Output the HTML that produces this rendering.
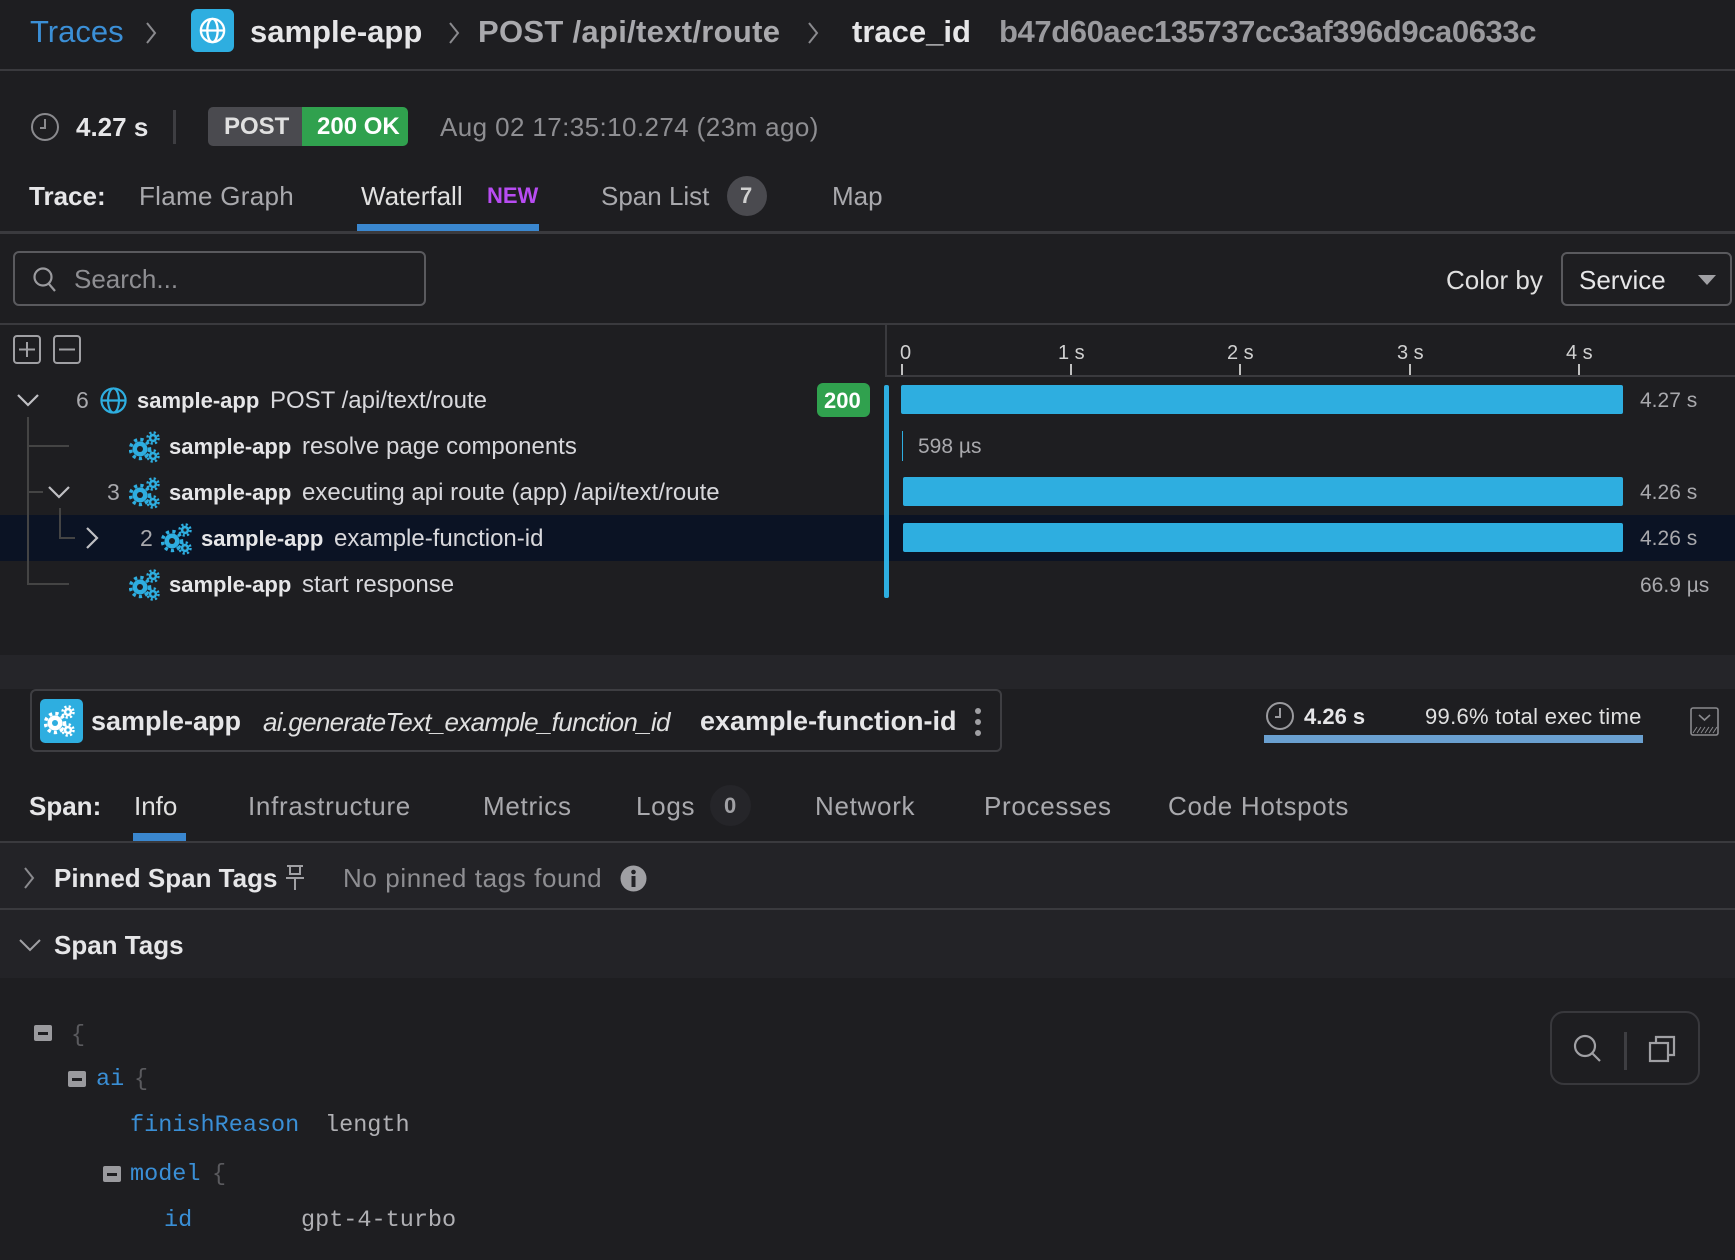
<!DOCTYPE html>
<html><head><meta charset="utf-8">
<style>
*{margin:0;padding:0;box-sizing:border-box}
body{width:1735px;height:1260px;background:#1e1e21;font-family:"Liberation Sans",sans-serif;position:relative;overflow:hidden;color:#a9a9ad}
.t{position:absolute;white-space:nowrap;line-height:1}
.b{font-weight:bold;color:#e6e6e8}
.abs{position:absolute}
.hl{position:absolute;background:#3a3a3e}
.n{font-size:24px;color:#d8d8dc}
.st{font-size:26px;letter-spacing:0.7px}
</style></head><body>
<!-- header -->
<div class="t" style="left:30px;top:16px;font-size:31px;color:#3b8fd6">Traces</div>
<svg class="abs" style="left:143px;top:20px" width="16" height="26"><path d="M4 3 L12 13 L4 23" stroke="#8a8a8e" stroke-width="2" fill="none"/></svg>
<div class="abs" style="left:191px;top:9px;width:43px;height:43px;background:#2eaee0;border-radius:6px"></div>
<svg class="abs" style="left:197px;top:15px" width="31" height="31" viewBox="0 0 24 24" fill="none" stroke="#fff" stroke-width="1.8"><circle cx="12" cy="12" r="9"/><ellipse cx="12" cy="12" rx="4" ry="9"/><line x1="3" y1="12" x2="21" y2="12"/></svg>
<div class="t b" style="left:250px;top:16px;font-size:31px">sample-app</div>
<svg class="abs" style="left:446px;top:20px" width="16" height="26"><path d="M4 3 L12 13 L4 23" stroke="#8a8a8e" stroke-width="2" fill="none"/></svg>
<div class="t" style="left:478px;top:16px;font-size:31px;font-weight:bold;color:#a9a9ad;letter-spacing:0.3px">POST /api/text/route</div>
<svg class="abs" style="left:805px;top:20px" width="16" height="26"><path d="M4 3 L12 13 L4 23" stroke="#8a8a8e" stroke-width="2" fill="none"/></svg>
<div class="t b" style="left:852px;top:16px;font-size:31px">trace_id</div>
<div class="t" style="left:999px;top:16px;font-size:31px;font-weight:bold;color:#9a9a9e;letter-spacing:-0.4px">b47d60aec135737cc3af396d9ca0633c</div>
<div class="hl" style="left:0;top:69px;width:1735px;height:2px"></div>

<!-- row 2 -->
<svg class="abs" style="left:30px;top:112px" width="30" height="30" viewBox="0 0 30 30" fill="none" stroke="#8a8a8e" stroke-width="2"><circle cx="15" cy="15" r="13"/><path d="M15 7 V16 H10"/></svg>
<div class="t b" style="left:76px;top:114px;font-size:26px">4.27 s</div>
<div class="abs" style="left:173px;top:110px;width:3px;height:34px;background:#3e3e42"></div>
<div class="abs" style="left:208px;top:107px;width:94px;height:39px;background:#4a4a4f;border-radius:5px 0 0 5px"></div>
<div class="t b" style="left:224px;top:115px;font-size:24px;color:#e0e0e0">POST</div>
<div class="abs" style="left:302px;top:107px;width:106px;height:39px;background:#30a14e;border-radius:0 5px 5px 0"></div>
<div class="t b" style="left:317px;top:115px;font-size:24px;color:#fff">200 OK</div>
<div class="t" style="left:440px;top:114px;font-size:26px;color:#8e8e92;letter-spacing:0.4px">Aug 02 17:35:10.274 (23m ago)</div>

<!-- tabs -->
<div class="t b" style="left:29px;top:183px;font-size:26px">Trace:</div>
<div class="t" style="left:139px;top:183px;font-size:26px;letter-spacing:0.3px">Flame Graph</div>
<div class="t" style="left:361px;top:183px;font-size:26px;color:#e0e0e0">Waterfall</div>
<div class="t" style="left:487px;top:185px;font-size:22px;font-weight:bold;color:#b84cf2">NEW</div>
<div class="abs" style="left:357px;top:224px;width:182px;height:7px;background:#3a87cf"></div>
<div class="t" style="left:601px;top:183px;font-size:26px">Span List</div>
<div class="abs" style="left:727px;top:176px;width:40px;height:40px;border-radius:50%;background:#4a4a4f"></div>
<div class="t b" style="left:740px;top:185px;font-size:22px;color:#d0d0d0">7</div>
<div class="t" style="left:832px;top:183px;font-size:26px">Map</div>
<div class="hl" style="left:0;top:231px;width:1735px;height:3px"></div>

<!-- search -->
<div class="abs" style="left:13px;top:251px;width:413px;height:55px;border:2px solid #5a5a5e;border-radius:6px"></div>
<svg class="abs" style="left:32px;top:266px" width="26" height="28" fill="none" stroke="#9a9a9e" stroke-width="2.2"><circle cx="11" cy="11" r="8.5"/><path d="M17 18 L23 25"/></svg>
<div class="t" style="left:74px;top:266px;font-size:26px;color:#8e8e92">Search...</div>
<div class="t" style="left:1446px;top:267px;font-size:26px;color:#e0e0e0">Color by</div>
<div class="abs" style="left:1561px;top:252px;width:171px;height:54px;border:2px solid #5a5a5e;border-radius:6px"></div>
<div class="t" style="left:1579px;top:267px;font-size:26px;color:#e6e6e8">Service</div>
<svg class="abs" style="left:1697px;top:274px" width="20" height="12"><path d="M1 1 H19 L10 11 Z" fill="#a0a0a4"/></svg>
<div class="hl" style="left:0;top:323px;width:1735px;height:2px"></div>

<!-- expand/collapse -->
<svg class="abs" style="left:13px;top:335px" width="70" height="29" fill="none" stroke="#a0a0a4" stroke-width="2"><rect x="1" y="1" width="26" height="27" rx="3"/><path d="M14 7 V22 M6 14.5 H22"/><rect x="41" y="1" width="26" height="27" rx="3"/><path d="M46 14.5 H62"/></svg>
<div class="abs" style="left:885px;top:324px;width:2px;height:52px;background:#3a3a3e"></div>
<div class="hl" style="left:885px;top:375px;width:850px;height:2px"></div>

<!-- axis -->
<div class="t" style="left:900px;top:343px;font-size:20px;color:#d0d0d0">0</div>
<div class="t" style="left:1058px;top:343px;font-size:20px;color:#d0d0d0">1 s</div>
<div class="t" style="left:1227px;top:343px;font-size:20px;color:#d0d0d0">2 s</div>
<div class="t" style="left:1397px;top:343px;font-size:20px;color:#d0d0d0">3 s</div>
<div class="t" style="left:1566px;top:343px;font-size:20px;color:#d0d0d0">4 s</div>
<div class="abs" style="left:901px;top:364px;width:2px;height:11px;background:#c0c0c0"></div>
<div class="abs" style="left:1070px;top:364px;width:2px;height:11px;background:#c0c0c0"></div>
<div class="abs" style="left:1239px;top:364px;width:2px;height:11px;background:#c0c0c0"></div>
<div class="abs" style="left:1409px;top:364px;width:2px;height:11px;background:#c0c0c0"></div>
<div class="abs" style="left:1578px;top:364px;width:2px;height:11px;background:#c0c0c0"></div>

<!-- highlighted row -->
<div class="abs" style="left:0;top:515px;width:1735px;height:46px;background:#0b1324"></div>

<!-- timeline -->
<div class="abs" style="left:884px;top:385px;width:5px;height:213px;background:#2eaee0;border-radius:2px"></div>
<div class="abs" style="left:901px;top:385px;width:722px;height:29px;background:#2eaee0;border-radius:2px"></div>
<div class="t" style="left:1640px;top:390px;font-size:21px">4.27 s</div>
<div class="abs" style="left:902px;top:431px;width:1px;height:30px;background:#2eaee0"></div>
<div class="t" style="left:918px;top:436px;font-size:21px">598 µs</div>
<div class="abs" style="left:903px;top:477px;width:720px;height:29px;background:#2eaee0;border-radius:2px"></div>
<div class="t" style="left:1640px;top:482px;font-size:21px">4.26 s</div>
<div class="abs" style="left:903px;top:523px;width:720px;height:29px;background:#2eaee0;border-radius:2px"></div>
<div class="t" style="left:1640px;top:528px;font-size:21px">4.26 s</div>
<div class="t" style="left:1640px;top:575px;font-size:21px">66.9 µs</div>

<!-- tree lines -->
<div class="abs" style="left:27px;top:417px;width:2px;height:168px;background:#444"></div>
<div class="abs" style="left:27px;top:445px;width:42px;height:2px;background:#444"></div>
<div class="abs" style="left:27px;top:491px;width:16px;height:2px;background:#444"></div>
<div class="abs" style="left:27px;top:583px;width:42px;height:2px;background:#444"></div>
<div class="abs" style="left:59px;top:508px;width:2px;height:31px;background:#444"></div>
<div class="abs" style="left:59px;top:537px;width:16px;height:2px;background:#444"></div>

<svg width="0" height="0" style="position:absolute"><defs>
<g id="gear"><g fill="#2eaee0">
<circle cx="11" cy="20" r="7.5"/><circle cx="11" cy="20" r="9.5" fill="none" stroke="#2eaee0" stroke-width="3.5" stroke-dasharray="3.2 3.2"/>
<circle cx="24" cy="9" r="4.2"/><circle cx="24" cy="9" r="5.5" fill="none" stroke="#2eaee0" stroke-width="2.5" stroke-dasharray="2.2 2.2"/>
<circle cx="24" cy="27" r="4.2"/><circle cx="24" cy="27" r="5.5" fill="none" stroke="#2eaee0" stroke-width="2.5" stroke-dasharray="2.2 2.2"/>
</g><circle cx="11" cy="20" r="3" fill="#1e1e21"/><circle cx="24" cy="9" r="1.6" fill="#1e1e21"/><circle cx="24" cy="27" r="1.6" fill="#1e1e21"/></g>
</defs></svg>

<!-- row 1 -->
<svg class="abs" style="left:16px;top:392px" width="24" height="16" fill="none" stroke="#c0c0c4" stroke-width="2.2"><path d="M2 3 L12 13 L22 3"/></svg>
<div class="t" style="left:76px;top:389px;font-size:23px">6</div>
<svg class="abs" style="left:99px;top:386px" width="29" height="29" viewBox="0 0 24 24" fill="none" stroke="#2eaee0" stroke-width="1.8"><circle cx="12" cy="12" r="10"/><ellipse cx="12" cy="12" rx="4.5" ry="10"/><line x1="2" y1="12" x2="22" y2="12"/></svg>
<div class="t b" style="left:137px;top:390px;font-size:22px">sample-app</div>
<div class="t n" style="left:270px;top:389px">POST /api/text/route</div>
<div class="abs" style="left:817px;top:383px;width:53px;height:34px;background:#30a14e;border-radius:6px"></div>
<div class="t b" style="left:824px;top:390px;font-size:22px;color:#fff">200</div>
<!-- row 2 -->
<svg class="abs" style="left:129px;top:429px" width="34" height="36"><use href="#gear"/></svg>
<div class="t b" style="left:169px;top:436px;font-size:22px">sample-app</div>
<div class="t n" style="left:302px;top:435px">resolve page components</div>
<!-- row 3 -->
<svg class="abs" style="left:47px;top:484px" width="24" height="16" fill="none" stroke="#c0c0c4" stroke-width="2.2"><path d="M2 3 L12 13 L22 3"/></svg>
<div class="t" style="left:107px;top:481px;font-size:23px">3</div>
<svg class="abs" style="left:129px;top:475px" width="34" height="36"><use href="#gear"/></svg>
<div class="t b" style="left:169px;top:482px;font-size:22px">sample-app</div>
<div class="t n" style="left:302px;top:481px">executing api route (app) /api/text/route</div>
<!-- row 4 -->
<svg class="abs" style="left:84px;top:526px" width="16" height="24" fill="none" stroke="#c0c0c4" stroke-width="2.2"><path d="M3 2 L13 12 L3 22"/></svg>
<div class="t" style="left:140px;top:527px;font-size:23px">2</div>
<svg class="abs" style="left:161px;top:521px" width="34" height="36"><use href="#gear"/></svg>
<div class="t b" style="left:201px;top:528px;font-size:22px">sample-app</div>
<div class="t n" style="left:334px;top:527px">example-function-id</div>
<!-- row 5 -->
<svg class="abs" style="left:129px;top:567px" width="34" height="36"><use href="#gear"/></svg>
<div class="t b" style="left:169px;top:574px;font-size:22px">sample-app</div>
<div class="t n" style="left:302px;top:573px">start response</div>

<!-- band -->
<div class="abs" style="left:0;top:655px;width:1735px;height:34px;background:#252529"></div>

<!-- span header card -->
<div class="abs" style="left:30px;top:689px;width:972px;height:63px;border:2px solid #3e3e42;border-radius:6px"></div>
<div class="abs" style="left:40px;top:699px;width:43px;height:44px;background:#2eaee0;border-radius:5px"></div>
<svg class="abs" style="left:44px;top:703px" width="36" height="36"><g fill="#fff"><circle cx="11" cy="20" r="7.5"/><circle cx="11" cy="20" r="9.5" fill="none" stroke="#fff" stroke-width="3.5" stroke-dasharray="3.2 3.2"/><circle cx="24" cy="9" r="4.2"/><circle cx="24" cy="9" r="5.5" fill="none" stroke="#fff" stroke-width="2.5" stroke-dasharray="2.2 2.2"/><circle cx="24" cy="27" r="4.2"/><circle cx="24" cy="27" r="5.5" fill="none" stroke="#fff" stroke-width="2.5" stroke-dasharray="2.2 2.2"/></g><circle cx="11" cy="20" r="3" fill="#2eaee0"/><circle cx="24" cy="9" r="1.6" fill="#2eaee0"/><circle cx="24" cy="27" r="1.6" fill="#2eaee0"/></svg>
<div class="t b" style="left:91px;top:708px;font-size:27px">sample-app</div>
<div class="t" style="left:263px;top:709px;font-size:26px;font-style:italic;color:#e0e0e0;letter-spacing:-0.7px">ai.generateText_example_function_id</div>
<div class="t b" style="left:700px;top:708px;font-size:27px">example-function-id</div>
<svg class="abs" style="left:972px;top:706px" width="12" height="32" fill="#a0a0a4"><circle cx="6" cy="5" r="3"/><circle cx="6" cy="16" r="3"/><circle cx="6" cy="27" r="3"/></svg>

<svg class="abs" style="left:1265px;top:701px" width="30" height="30" fill="none" stroke="#9a9a9e" stroke-width="2"><circle cx="15" cy="15" r="13"/><path d="M15 7 V16 H10"/></svg>
<div class="t b" style="left:1304px;top:706px;font-size:22px">4.26 s</div>
<div class="t" style="left:1425px;top:706px;font-size:22px;color:#e0e0e0;letter-spacing:0.3px">99.6% total exec time</div>
<div class="abs" style="left:1264px;top:735px;width:379px;height:8px;background:#6aa0d0"></div>
<svg class="abs" style="left:1690px;top:707px" width="29" height="29" fill="none" stroke="#8a8a8e" stroke-width="1.6"><rect x="1" y="1" width="27" height="27" rx="2"/><path d="M9 8 L14.5 13 L20 8"/><path d="M3 26 L7 20 M7 26 L11 20 M11 26 L15 20 M15 26 L19 20 M19 26 L23 20 M23 26 L27 20" stroke-width="1"/></svg>

<!-- span tabs -->
<div class="t b" style="left:29px;top:793px;font-size:26px">Span:</div>
<div class="t" style="left:134px;top:793px;font-size:26px;color:#e0e0e0">Info</div>
<div class="abs" style="left:133px;top:833px;width:53px;height:8px;background:#3a87cf"></div>
<div class="t st" style="left:248px;top:793px">Infrastructure</div>
<div class="t st" style="left:483px;top:793px">Metrics</div>
<div class="t st" style="left:636px;top:793px">Logs</div>
<div class="abs" style="left:710px;top:785px;width:41px;height:41px;border-radius:50%;background:#252529"></div>
<div class="t b" style="left:724px;top:795px;font-size:22px;color:#a0a0a4">0</div>
<div class="t st" style="left:815px;top:793px">Network</div>
<div class="t st" style="left:984px;top:793px">Processes</div>
<div class="t st" style="left:1168px;top:793px">Code Hotspots</div>
<div class="hl" style="left:0;top:841px;width:1735px;height:2px"></div>

<!-- pinned -->
<div class="abs" style="left:0;top:843px;width:1735px;height:66px;background:#232327"></div>
<svg class="abs" style="left:22px;top:866px" width="14" height="24" fill="none" stroke="#8a8a8e" stroke-width="2"><path d="M3 2 L11 12 L3 22"/></svg>
<div class="t b" style="left:54px;top:865px;font-size:26px">Pinned Span Tags</div>
<svg class="abs" style="left:284px;top:864px" width="22" height="28" fill="none" stroke="#a0a0a4" stroke-width="2"><path d="M3 2 H19 M6 2 V10 H16 V2 M2 14 H20 M11 14 V26"/></svg>
<div class="t" style="left:343px;top:865px;font-size:26px;color:#8e8e92;letter-spacing:0.6px">No pinned tags found</div>
<svg class="abs" style="left:620px;top:865px" width="27" height="27"><circle cx="13.5" cy="13.5" r="13" fill="#a0a0a4"/><rect x="11.5" y="11" width="4" height="11" fill="#232327"/><circle cx="13.5" cy="7" r="2.3" fill="#232327"/></svg>
<div class="hl" style="left:0;top:908px;width:1735px;height:2px"></div>
<div class="abs" style="left:0;top:910px;width:1735px;height:68px;background:#232327"></div>
<svg class="abs" style="left:18px;top:937px" width="24" height="16" fill="none" stroke="#a0a0a4" stroke-width="2"><path d="M2 3 L12 13 L22 3"/></svg>
<div class="t b" style="left:54px;top:932px;font-size:26px">Span Tags</div>

<!-- json -->
<div style="position:absolute;left:0;top:0;font-family:'Liberation Mono',monospace;font-size:23.5px">
<div class="abs" style="left:34px;top:1025px;width:18px;height:16px;background:#9a9a9e;border-radius:2px"><div style="margin:7px 4px;height:3px;background:#1e1e21"></div></div>
<div class="t" style="left:71px;top:1024px;color:#5a5a5e">{</div>
<div class="abs" style="left:68px;top:1071px;width:18px;height:16px;background:#9a9a9e;border-radius:2px"><div style="margin:7px 4px;height:3px;background:#1e1e21"></div></div>
<div class="t" style="left:96px;top:1068px;color:#3a8fd6">ai</div>
<div class="t" style="left:134px;top:1068px;color:#5a5a5e">{</div>
<div class="t" style="left:130px;top:1114px;color:#3a8fd6">finishReason</div>
<div class="t" style="left:325px;top:1114px;color:#b0b0b4">length</div>
<div class="abs" style="left:103px;top:1166px;width:18px;height:16px;background:#9a9a9e;border-radius:2px"><div style="margin:7px 4px;height:3px;background:#1e1e21"></div></div>
<div class="t" style="left:130px;top:1163px;color:#3a8fd6">model</div>
<div class="t" style="left:212px;top:1163px;color:#5a5a5e">{</div>
<div class="t" style="left:164px;top:1209px;color:#3a8fd6">id</div>
<div class="t" style="left:301px;top:1209px;color:#b0b0b4">gpt-4-turbo</div>
</div>

<div class="abs" style="left:1550px;top:1011px;width:150px;height:74px;border:2px solid #38383c;border-radius:14px"></div>
<svg class="abs" style="left:1572px;top:1033px" width="32" height="32" fill="none" stroke="#a0a0a4" stroke-width="2.2"><circle cx="13" cy="13" r="10"/><path d="M20 20 L28 28"/></svg>
<div class="abs" style="left:1624px;top:1032px;width:3px;height:38px;background:#3e3e42"></div>
<svg class="abs" style="left:1648px;top:1034px" width="30" height="30" fill="none" stroke="#a0a0a4" stroke-width="2.2"><rect x="2" y="9" width="18" height="18"/><path d="M8 9 V3 H26 V21 H20"/></svg>
</body></html>
